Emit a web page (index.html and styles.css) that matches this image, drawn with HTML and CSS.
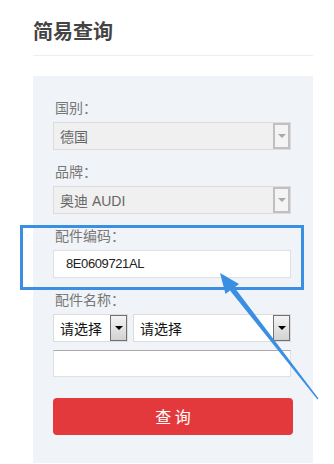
FILE: index.html
```html
<!DOCTYPE html>
<html lang="zh-CN">
<head>
    <meta charset="UTF-8">
    <title>简易查询</title>
    <link rel="stylesheet" href="styles.css">
</head>
<body>
    <div class="page">
        <h2 class="title">简易查询</h2>
        <div class="panel">
            <div class="field">
                <div class="label">国别：</div>
                <div class="select disabled">
                    <span class="value">德国</span>
                    <span class="drop"><i></i></span>
                </div>
            </div>
            <div class="field">
                <div class="label">品牌：</div>
                <div class="select disabled">
                    <span class="value">奥迪 AUDI</span>
                    <span class="drop"><i></i></span>
                </div>
            </div>
            <div class="field">
                <div class="label">配件编码：</div>
                <div class="input code">8E0609721AL</div>
            </div>
            <div class="field">
                <div class="label">配件名称：</div>
                <div class="select-row">
                    <div class="select small">
                        <span class="value">请选择</span>
                        <span class="drop"><i></i></span>
                    </div>
                    <div class="select wide">
                        <span class="value">请选择</span>
                        <span class="drop"><i></i></span>
                    </div>
                </div>
                <div class="input name"></div>
            </div>
            <button class="search-btn">查 询</button>
        </div>
    </div>
    <!-- annotation: highlight box and arrow -->
    <svg class="annotation" width="334" height="464" viewBox="0 0 334 464">
        <rect x="21.5" y="226.5" width="281" height="62" fill="none" stroke="#3a8fe2" stroke-width="3"/>
        <polygon fill="#3a8fe2" points="220,273 239,284 234.5,287.5 318.5,398.5 317.5,399.5 230,290.5 225.5,294"/>
    </svg>
</body>
</html>
```

FILE: styles.css
```css
body {
    margin: 0;
    background: #fff;
    font-family: "Liberation Sans", "Noto Sans CJK SC", sans-serif;
}
.page {
    position: relative;
    width: 280px;
    padding-left: 33px;
}
.title {
    margin: 0;
    padding: 18px 0 9px;
    font-size: 20px;
    line-height: 28px;
    font-weight: bold;
    color: #444;
    border-bottom: 1px solid #eeeeee;
}
.panel {
    margin-top: 20px;
    background: #f0f3f8;
    padding: 22px 20px 28px 20px;
}
.field {
    margin-bottom: 12px;
}
.label {
    font-size: 14px;
    line-height: 20px;
    color: #777;
    padding-left: 2px;
    margin-bottom: 4px;
}
.select {
    display: flex;
    align-items: center;
    justify-content: space-between;
    box-sizing: border-box;
    width: 238px;
    height: 28px;
    border: 1px solid #dcdcdc;
    background: #fff;
    font-size: 14px;
    color: #111;
}
.select .value {
    padding-left: 6px;
}
.select.disabled {
    background: #f0f0f0;
    color: #666;
}
.drop {
    display: flex;
    align-items: center;
    justify-content: center;
    box-sizing: border-box;
    width: 17px;
    height: 26px;
    border: 1px solid #707070;
    background: linear-gradient(#f4f4f4, #d2d2d2);
}
.drop i {
    width: 0;
    height: 0;
    border-left: 4px solid transparent;
    border-right: 4px solid transparent;
    border-top: 4px solid #000;
}
.disabled .drop {
    border: 2px solid #c0c0c0;
    background: #f4f4f4;
}
.disabled .drop i {
    border-top-color: #a8a8a8;
}
.select-row {
    display: flex;
    gap: 5px;
}
.select.small {
    width: 75px;
}
.select.wide {
    width: 158px;
}
.input {
    box-sizing: border-box;
    width: 238px;
    height: 28px;
    border: 1px solid #dde0e6;
    background: #fff;
    font-size: 13px;
    line-height: 26px;
    color: #222;
}
.input.code {
    padding-left: 12px;
    letter-spacing: -0.4px;
}
.input.name {
    margin-top: 8px;
    height: 27px;
    border-top-color: #aaa;
}
.search-btn {
    display: block;
    width: 240px;
    height: 37px;
    margin-top: 21px;
    padding: 0 0 2px;
    border: none;
    border-radius: 4px;
    background: #e4393c;
    color: #fff;
    font-family: "Noto Sans CJK SC", sans-serif;
    font-size: 16px;
}
.annotation {
    position: absolute;
    left: 0;
    top: 0;
    pointer-events: none;
}
```
